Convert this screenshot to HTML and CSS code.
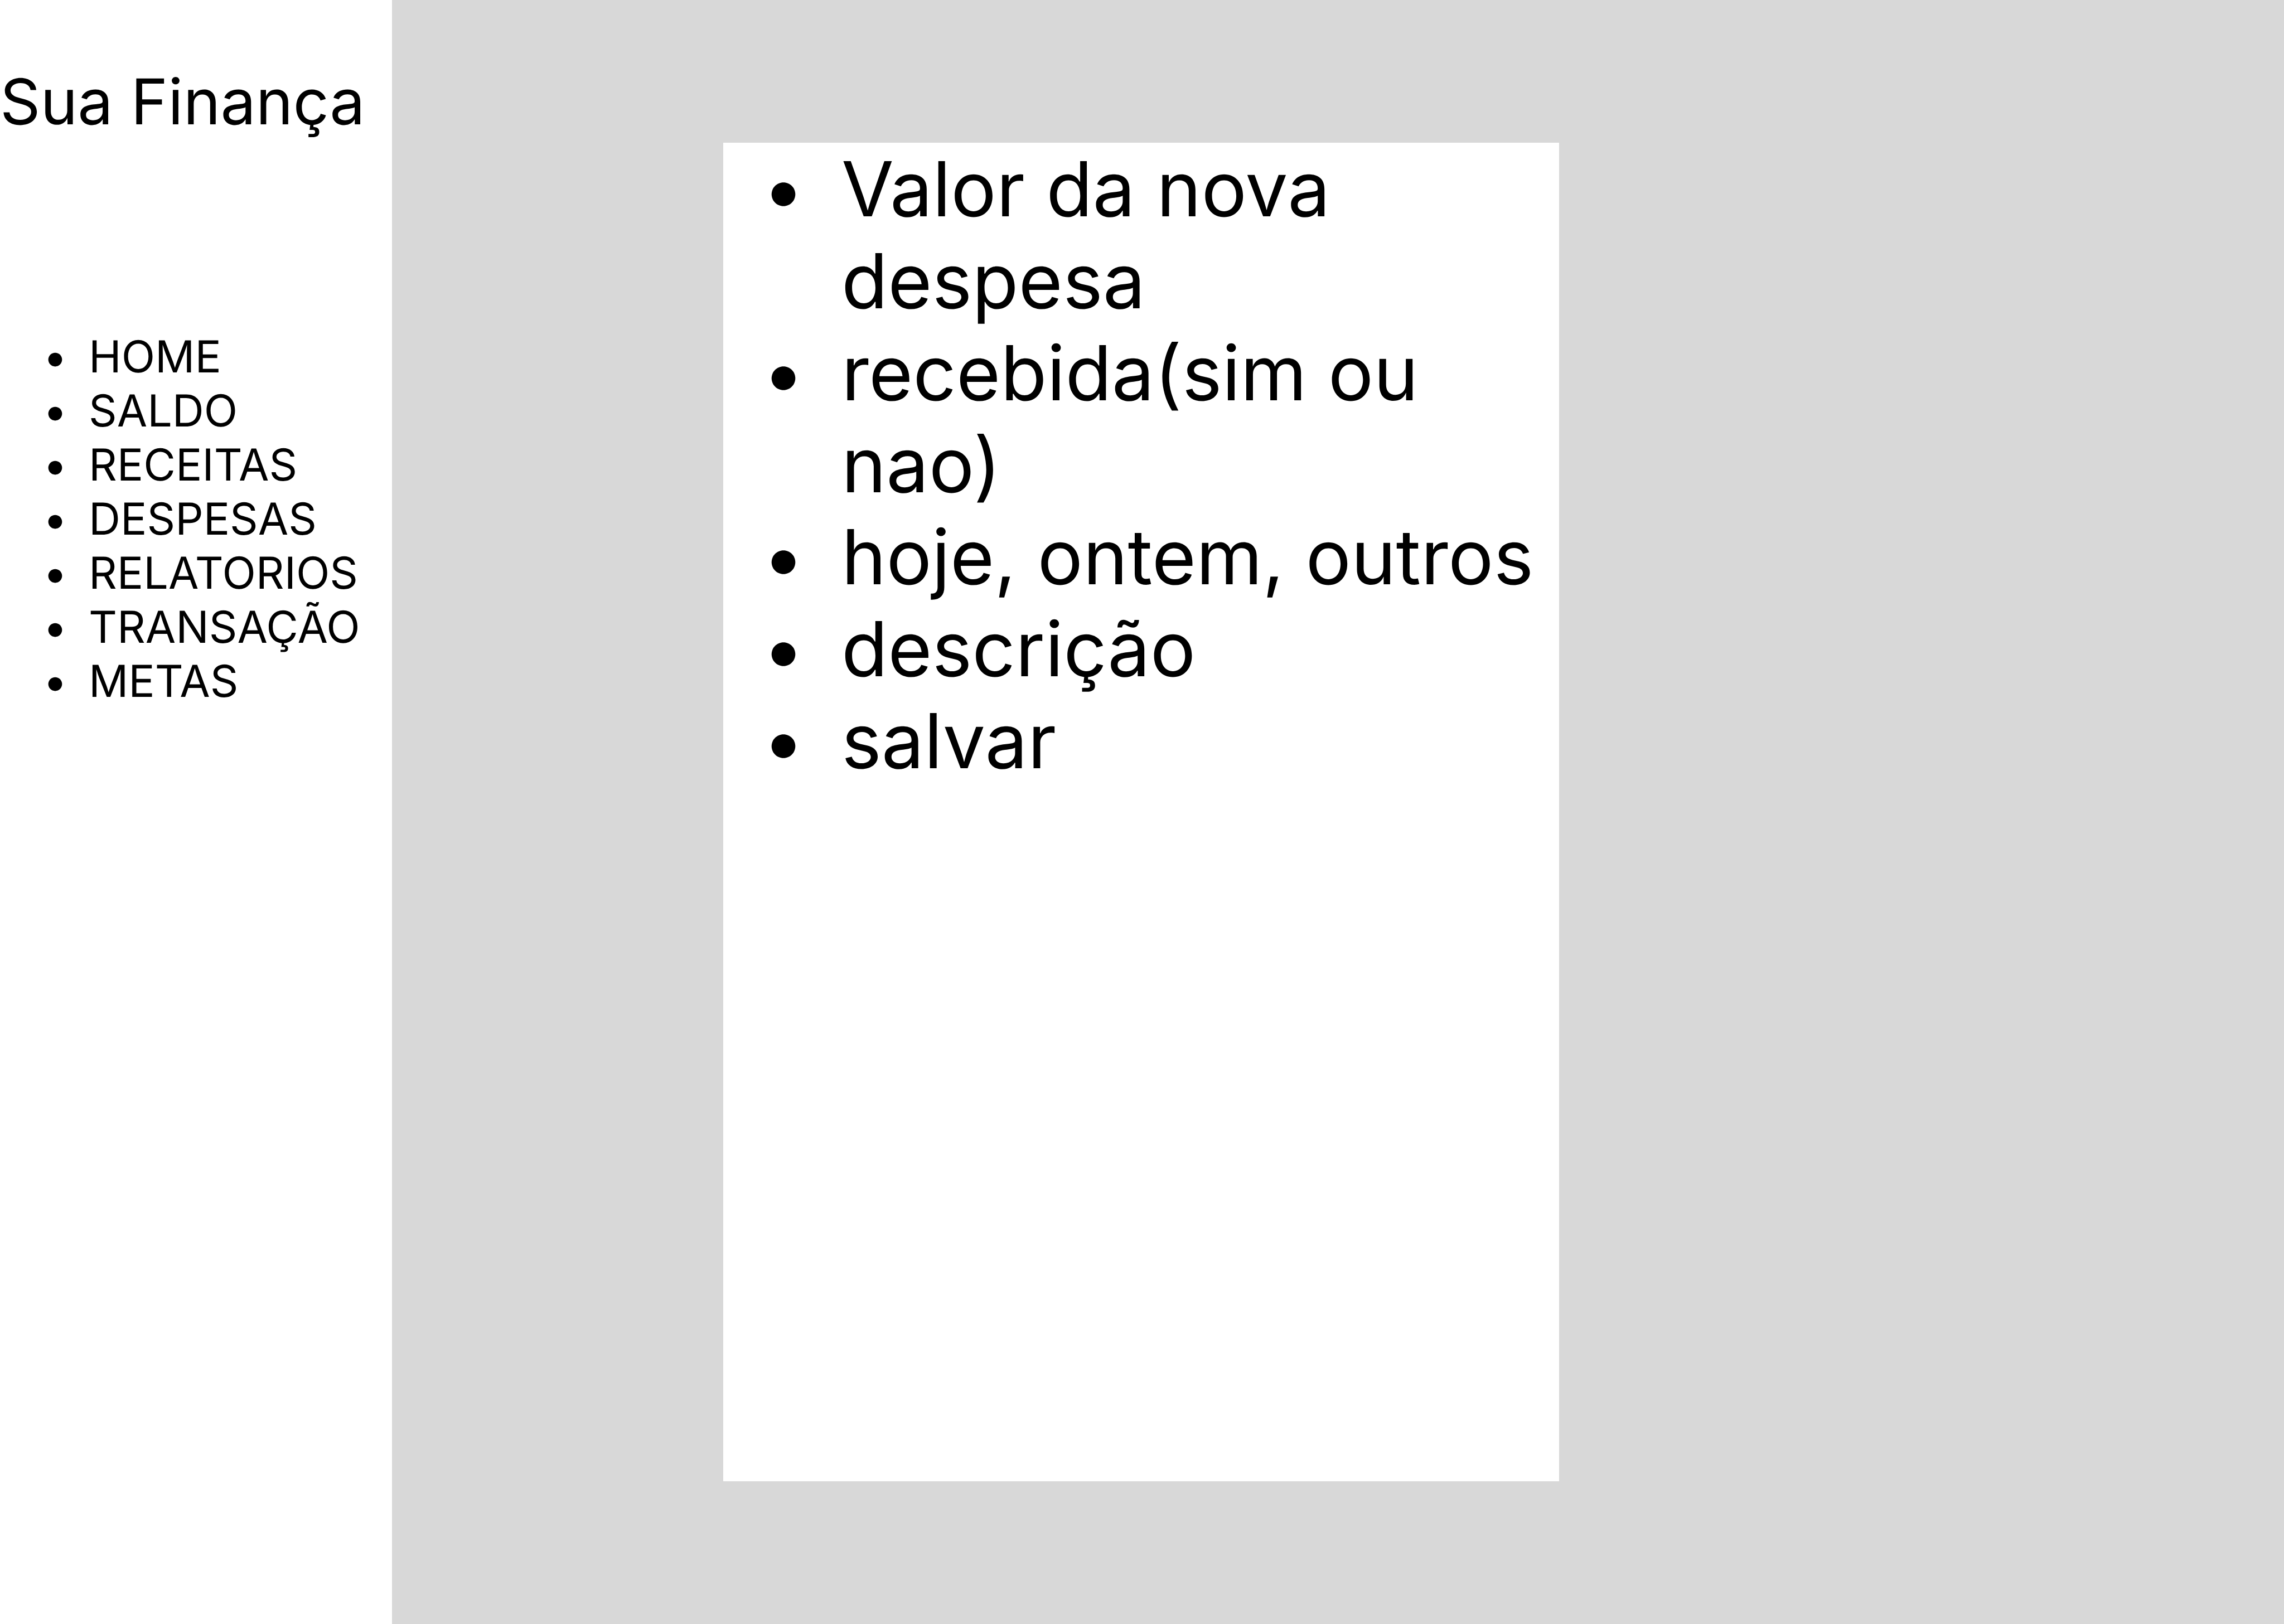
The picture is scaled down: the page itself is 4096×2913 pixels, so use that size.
FILE: index.html
```html
<!DOCTYPE html>
<html lang="pt-BR">
<head>
  <meta charset="utf-8">
  <meta name="viewport" content="width=device-width, initial-scale=1">
  <title>Sua Finança</title>
  <link rel="stylesheet" href="styles.css">
</head>
<body>
  <div class="app">
    <aside class="sidebar">
      <h1 class="brand">Sua Finança</h1>
      <nav>
        <ul class="list menu">
          <li class="item"><a class="link" href="#home">HOME</a></li>
          <li class="item"><a class="link" href="#saldo">SALDO</a></li>
          <li class="item"><a class="link" href="#receitas">RECEITAS</a></li>
          <li class="item"><a class="link" href="#despesas">DESPESAS</a></li>
          <li class="item"><a class="link" href="#relatorios">RELATORIOS</a></li>
          <li class="item"><a class="link" href="#transacao">TRANSAÇÃO</a></li>
          <li class="item"><a class="link" href="#metas">METAS</a></li>
        </ul>
      </nav>
    </aside>
    <main class="content">
      <section class="card">
        <ul class="list fields">
          <li class="item">Valor da nova despesa</li>
          <li class="item">recebida(sim ou nao)</li>
          <li class="item">hoje, ontem, outros</li>
          <li class="item">descrição</li>
          <li class="item">salvar</li>
        </ul>
      </section>
    </main>
  </div>
</body>
</html>
```
FILE: styles.css
```css
* {
  box-sizing: border-box;
}

body {
  margin: 0;
  background: #d8d8d8;
  color: #000;
  font-family: Inter, "Liberation Sans", sans-serif;
  text-rendering: geometricPrecision;
}

.app {
  display: grid;
  grid-template-columns: 703px 1fr;
  min-height: 100vh;
}

.sidebar {
  background: #fff;
}

.brand {
  margin: 0;
  padding-top: 114px;
  font-size: 113px;
  font-weight: 400;
  line-height: 138px;
  white-space: nowrap;
}

.list {
  margin: 0;
  padding: 0;
  list-style: none;
}

.item {
  display: grid;
}

.item::before {
  content: "•";
  text-align: center;
}

.menu {
  padding-top: 340px;
  padding-left: 39px;
  font-size: 79px;
  line-height: 97px;
}

.menu .item {
  grid-template-columns: 120px 1fr;
}

.link {
  color: inherit;
  text-decoration: none;
}

.content {
  display: grid;
  grid-template-columns: 594fr 1499fr 1300fr;
  padding: 256px 0;
}

.card {
  grid-column: 2;
  background: #fff;
}

.fields {
  padding-left: 4px;
  font-size: 136px;
  line-height: 165px;
}

.fields .item {
  grid-template-columns: 208px 1fr;
}
```
